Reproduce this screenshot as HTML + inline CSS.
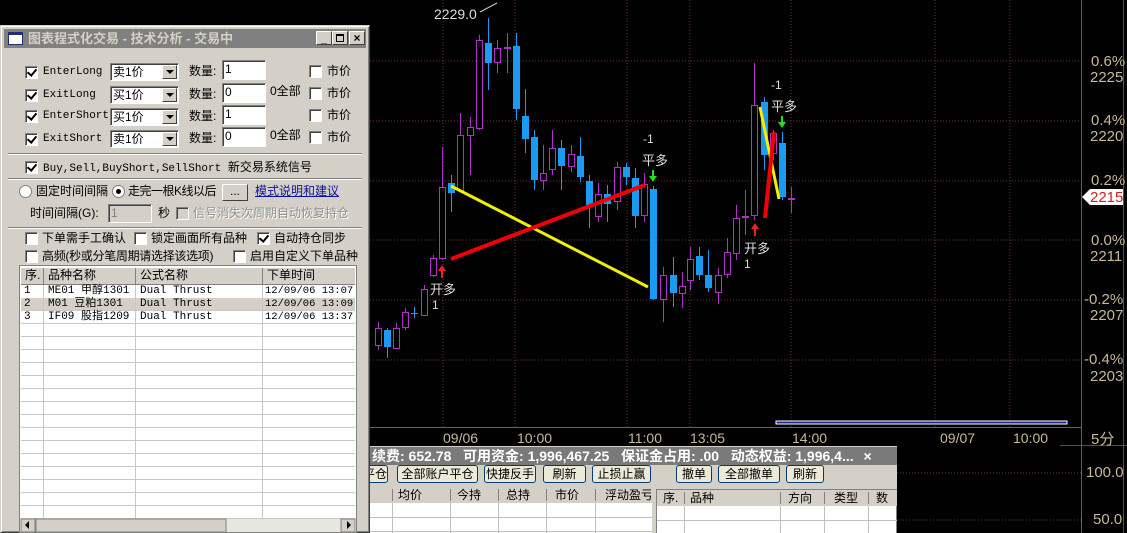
<!DOCTYPE html>
<html><head><meta charset="utf-8"><style>
*{margin:0;padding:0;box-sizing:border-box}
body{width:1127px;height:533px;overflow:hidden;background:#000;position:relative;font-family:"Liberation Sans","Noto Sans CJK SC","WenQuanYi Zen Hei",sans-serif;font-size:12px;color:#000}
.a{position:absolute;white-space:nowrap}
.t{position:absolute;white-space:nowrap;font-size:12px;line-height:16px}
.cb{position:absolute;width:13px;height:13px;background:#fff;border:1px solid;border-color:#808080 #fff #fff #808080;box-shadow:inset 1px 1px 0 #404040}
.cb.k::after{content:"";position:absolute;left:3px;top:0px;width:4px;height:7px;border:solid #000;border-width:0 2px 2px 0;transform:rotate(40deg)}
.cb.d{background:#d4d0c8}
.sel{position:absolute;width:69px;height:18px;background:#fff;border:1px solid;border-color:#808080 #fff #fff #808080;box-shadow:inset 1px 1px 0 #404040;padding-left:2px;line-height:16px;font-size:12px}
.sel i{position:absolute;right:1px;top:1px;width:15px;height:14px;background:#d4d0c8;border:1px solid;border-color:#fff #404040 #404040 #fff}
.sel i::after{content:"";position:absolute;left:3px;top:4px;border:4px solid transparent;border-top:4px solid #000}
.inp{position:absolute;width:44px;height:20px;background:#fff;border:1px solid;border-color:#808080 #fff #fff #808080;box-shadow:inset 1px 1px 0 #404040;padding-left:2px;line-height:17px}
.sep{position:absolute;left:8px;width:354px;height:2px;border-top:1px solid #808080;border-bottom:1px solid #fff}
.mono{font-family:"Liberation Mono","Noto Sans CJK SC",monospace;font-size:11px;line-height:16px}
.btn{position:absolute;top:465px;height:18px;background:#ece9d8;border:1px solid #003c74;border-radius:3px;line-height:16px;text-align:center;font-size:12px;white-space:nowrap;overflow:hidden}
.ax{position:absolute;color:#c8b898;font-size:15px;white-space:nowrap}
</style></head><body>
<svg class="a" style="left:0;top:0" width="1127" height="533">
<g stroke="#6a3a28" stroke-dasharray="1,2" stroke-width="1">
<line x1="370" y1="61" x2="1082" y2="61"/><line x1="370" y1="121" x2="1082" y2="121"/><line x1="370" y1="181" x2="1082" y2="181"/><line x1="370" y1="240" x2="1082" y2="240"/><line x1="370" y1="300" x2="1082" y2="300"/><line x1="370" y1="360" x2="1082" y2="360"/>
<line x1="897" y1="473" x2="1082" y2="473"/><line x1="897" y1="520" x2="1082" y2="520"/>
<line x1="443" y1="0" x2="443" y2="427"/><line x1="515" y1="0" x2="515" y2="427"/><line x1="627" y1="0" x2="627" y2="427"/><line x1="690" y1="0" x2="690" y2="427"/><line x1="791" y1="0" x2="791" y2="427"/><line x1="935" y1="0" x2="935" y2="427"/><line x1="1010" y1="0" x2="1010" y2="427"/>
</g>
<line x1="370" y1="427.5" x2="1082" y2="427.5" stroke="#7a5a48"/>
<line x1="1081.5" y1="0" x2="1081.5" y2="533" stroke="#7a5a48"/>
<line x1="1060" y1="445.5" x2="1127" y2="445.5" stroke="#c02020"/>
<line x1="1123.5" y1="0" x2="1123.5" y2="533" stroke="#c02020"/>
<rect x="776" y="421" width="291" height="3" fill="#1a2a90" stroke="#fff" stroke-width="1"/>
<g id="cd"></g>
<line x1="451" y1="186" x2="648" y2="287" stroke="#f0f000" stroke-width="3"/>
<line x1="451" y1="259" x2="645" y2="185" stroke="#f00000" stroke-width="4"/>
<line x1="760" y1="107" x2="779" y2="199" stroke="#f0f000" stroke-width="3"/>
<line x1="765" y1="218" x2="774" y2="132" stroke="#f00000" stroke-width="4"/>
<line x1="480" y1="12" x2="497" y2="3" stroke="#ccc"/>
<path d="M442 265l-4 6h3v7h2v-7h3z" fill="#f02020"/><path d="M755 223l-4 6h3v7h2v-7h3z" fill="#f02020"/>
<path d="M653 182l-4-6h3v-6h2v6h3z" fill="#20e020"/><path d="M782 128l-4-6h3v-6h2v6h3z" fill="#20e020"/>
<path d="M1082 197l8-8h33v16h-33z" fill="#fff"/>
</svg>
<div class="a" style="left:434px;top:6px;color:#ddd;font-size:14px">2229.0</div>
<div class="a" style="left:430px;top:279px;color:#ddd;font-size:13px">开多</div>
<div class="a" style="left:432px;top:298px;color:#ddd;font-size:12px">1</div>
<div class="a" style="left:643px;top:132px;color:#ddd;font-size:12px">-1</div>
<div class="a" style="left:642px;top:150px;color:#ddd;font-size:13px">平多</div>
<div class="a" style="left:771px;top:78px;color:#ddd;font-size:12px">-1</div>
<div class="a" style="left:771px;top:96px;color:#ddd;font-size:13px">平多</div>
<div class="a" style="left:744px;top:238px;color:#ddd;font-size:13px">开多</div>
<div class="a" style="left:744px;top:257px;color:#ddd;font-size:12px">1</div>
<div class="ax" style="left:1091px;top:53px">0.6%</div><div class="ax" style="left:1090px;top:69px">2225</div>
<div class="ax" style="left:1091px;top:112px">0.4%</div><div class="ax" style="left:1090px;top:128px">2220</div>
<div class="ax" style="left:1091px;top:172px">0.2%</div><div class="ax" style="left:1090px;top:189px;color:#d02020">2215</div>
<div class="ax" style="left:1091px;top:232px">0.0%</div><div class="ax" style="left:1090px;top:248px">2211</div>
<div class="ax" style="left:1084px;top:291px">-0.2%</div><div class="ax" style="left:1090px;top:307px">2207</div>
<div class="ax" style="left:1084px;top:351px">-0.4%</div><div class="ax" style="left:1090px;top:368px">2203</div>
<div class="ax" style="left:1091px;top:428px">5分</div>
<div class="ax" style="left:1086px;top:464px">100.0</div>
<div class="ax" style="left:1093px;top:511px">50.0</div>
<div class="ax" style="left:443px;top:430px;font-size:14px">09/06</div>
<div class="ax" style="left:517px;top:430px;font-size:14px">10:00</div>
<div class="ax" style="left:628px;top:430px;font-size:14px">11:00</div>
<div class="ax" style="left:690px;top:430px;font-size:14px">13:05</div>
<div class="ax" style="left:792px;top:430px;font-size:14px">14:00</div>
<div class="ax" style="left:940px;top:430px;font-size:14px">09/07</div>
<div class="ax" style="left:1013px;top:430px;font-size:14px">10:00</div>

<!-- bottom panel -->
<div class="a" style="left:370px;top:446px;width:527px;height:87px;background:#d4d0c8;overflow:hidden">
 <div class="a" style="left:0;top:1px;width:527px;height:18px;background:#7a7a7a;color:#fff;font-weight:bold;font-size:14px;line-height:18px;padding-left:2px">续费: 652.78&nbsp;&nbsp; 可用资金: 1,996,467.25&nbsp;&nbsp; 保证金占用: .00&nbsp;&nbsp; 动态权益: 1,996,4... <span style="margin-left:6px">×</span></div>
</div>
<div class="btn" style="left:362px;width:26px;text-align:right;padding-right:2px">平仓</div>
<div class="btn" style="left:397px;width:81px">全部账户平仓</div>
<div class="btn" style="left:484px;width:52px">快捷反手</div>
<div class="btn" style="left:543px;width:43px">刷新</div>
<div class="btn" style="left:592px;width:59px">止损止赢</div>
<div class="btn" style="left:676px;width:36px">撤单</div>
<div class="btn" style="left:718px;width:62px">全部撤单</div>
<div class="btn" style="left:786px;width:38px">刷新</div>
<svg class="a" style="left:370px;top:487px" width="527" height="46">
<rect x="0" y="0" width="282" height="46" fill="#fff"/>
<rect x="0" y="0" width="282" height="16" fill="#d4d0c8"/>
<g stroke="#c0c0c0"><line x1="0" y1="30.5" x2="282" y2="30.5"/><line x1="0" y1="44.5" x2="282" y2="44.5"/>
<line x1="22.5" y1="16" x2="22.5" y2="46"/><line x1="80.5" y1="16" x2="80.5" y2="46"/><line x1="128.5" y1="16" x2="128.5" y2="46"/><line x1="176.5" y1="16" x2="176.5" y2="46"/><line x1="225.5" y1="16" x2="225.5" y2="46"/></g>
<g stroke="#808080"><line x1="22.5" y1="2" x2="22.5" y2="14"/><line x1="80.5" y1="2" x2="80.5" y2="14"/><line x1="128.5" y1="2" x2="128.5" y2="14"/><line x1="176.5" y1="2" x2="176.5" y2="14"/><line x1="225.5" y1="2" x2="225.5" y2="14"/></g>
<rect x="286.5" y="2.5" width="240" height="44" fill="#fff" stroke="#808080"/>
<rect x="287" y="3" width="240" height="16" fill="#d4d0c8"/>
<g stroke="#c0c0c0"><line x1="287" y1="33.5" x2="527" y2="33.5"/><line x1="314.5" y1="19" x2="314.5" y2="46"/><line x1="410.5" y1="19" x2="410.5" y2="46"/><line x1="454.5" y1="19" x2="454.5" y2="46"/><line x1="498.5" y1="19" x2="498.5" y2="46"/></g>
<g stroke="#808080"><line x1="314.5" y1="5" x2="314.5" y2="17"/><line x1="410.5" y1="5" x2="410.5" y2="17"/><line x1="454.5" y1="5" x2="454.5" y2="17"/><line x1="498.5" y1="5" x2="498.5" y2="17"/></g>
</svg>
<div class="t" style="left:398px;top:487px">均价</div><div class="t" style="left:457px;top:487px">今持</div><div class="t" style="left:506px;top:487px">总持</div><div class="t" style="left:555px;top:487px">市价</div><div class="t" style="left:605px;top:487px;width:46px;overflow:hidden">浮动盈亏</div>
<div class="t" style="left:663px;top:490px">序.</div><div class="t" style="left:690px;top:490px">品种</div><div class="t" style="left:788px;top:490px">方向</div><div class="t" style="left:834px;top:490px">类型</div><div class="t" style="left:876px;top:490px">数</div>

<!-- dialog -->
<div class="a" style="left:0;top:25px;width:370px;height:508px;background:#d4d0c8;border:1px solid;border-color:#d4d0c8 #404040 #404040 #d4d0c8;box-shadow:inset 1px 1px 0 #fff,inset -1px -1px 0 #808080"></div>
<div class="a" style="left:4px;top:29px;width:362px;height:19px;background:#808080;color:#d4d0c8;font-weight:bold;font-size:13px;line-height:19px;padding-left:24px">图表程式化交易 - 技术分析 - 交易中</div>
<div class="a" style="left:8px;top:32px;width:15px;height:13px;background:#fff;border:1px solid #203070;border-top:3px solid #203070"></div>
<div class="a" style="left:316px;top:31px;width:16px;height:14px;background:#d4d0c8;border:1px solid;border-color:#fff #404040 #404040 #fff;font-size:11px;text-align:center;line-height:14px;font-weight:bold">_</div>
<div class="a" style="left:332px;top:31px;width:16px;height:14px;background:#d4d0c8;border:1px solid;border-color:#fff #404040 #404040 #fff"><div style="margin:2px 3px;width:8px;height:8px;border:1px solid #000;border-top-width:2px"></div></div>
<div class="a" style="left:349px;top:31px;width:16px;height:14px;background:#d4d0c8;border:1px solid;border-color:#fff #404040 #404040 #fff;font-size:12px;text-align:center;line-height:12px;font-weight:bold">×</div>

<div class="cb k" style="left:25px;top:66px"></div><div class="a mono" style="left:43px;top:64px">EnterLong</div>
<div class="cb k" style="left:25px;top:89px"></div><div class="a mono" style="left:43px;top:87px">ExitLong</div>
<div class="cb k" style="left:25px;top:110px"></div><div class="a mono" style="left:43px;top:108px">EnterShort</div>
<div class="cb k" style="left:25px;top:133px"></div><div class="a mono" style="left:43px;top:131px">ExitShort</div>
<div class="sel" style="left:110px;top:63px">卖1价<i></i></div>
<div class="sel" style="left:110px;top:86px">买1价<i></i></div>
<div class="sel" style="left:110px;top:108px">买1价<i></i></div>
<div class="sel" style="left:110px;top:130px">卖1价<i></i></div>
<div class="t" style="left:189px;top:63px">数量:</div><div class="t" style="left:189px;top:86px">数量:</div><div class="t" style="left:189px;top:108px">数量:</div><div class="t" style="left:189px;top:130px">数量:</div>
<div class="inp" style="left:222px;top:60px">1</div><div class="inp" style="left:222px;top:83px">0</div><div class="inp" style="left:222px;top:105px">1</div><div class="inp" style="left:222px;top:127px">0</div>
<div class="t" style="left:270px;top:83px">0全部</div><div class="t" style="left:270px;top:127px">0全部</div>
<div class="cb" style="left:309px;top:65px"></div><div class="t" style="left:327px;top:63px">市价</div>
<div class="cb" style="left:309px;top:87px"></div><div class="t" style="left:327px;top:85px">市价</div>
<div class="cb" style="left:309px;top:109px"></div><div class="t" style="left:327px;top:107px">市价</div>
<div class="cb" style="left:309px;top:131px"></div><div class="t" style="left:327px;top:129px">市价</div>
<div class="sep" style="top:153px"></div>
<div class="cb k" style="left:25px;top:161px"></div><div class="a mono" style="left:43px;top:159px">Buy,Sell,BuyShort,SellShort <span style="font-family:'Noto Sans CJK SC',sans-serif;font-size:12px">新交易系统信号</span></div>
<div class="sep" style="top:178px"></div>
<div class="a" style="left:19px;top:185px;width:13px;height:13px;border-radius:50%;background:#fff;border:1px solid #808080"></div>
<div class="t" style="left:36px;top:183px">固定时间间隔</div>
<div class="a" style="left:112px;top:185px;width:13px;height:13px;border-radius:50%;background:#fff;border:1px solid #808080"><div style="margin:3px;width:5px;height:5px;border-radius:50%;background:#000"></div></div>
<div class="t" style="left:128px;top:183px;letter-spacing:-0.5px">走完一根K线以后</div>
<div class="a" style="left:222px;top:184px;width:26px;height:17px;background:#d4d0c8;border:1px solid;border-color:#fff #404040 #404040 #fff;text-align:center;line-height:13px">...</div>
<div class="t" style="left:255px;top:183px;color:#1010a0;text-decoration:underline">模式说明和建议</div>
<div class="t" style="left:30px;top:205px">时间间隔(G):</div>
<div class="inp" style="left:108px;top:204px;background:#d4d0c8;color:#808080;height:19px">1</div>
<div class="t" style="left:158px;top:205px">秒</div>
<div class="cb d" style="left:176px;top:207px"></div>
<div class="t" style="left:193px;top:205px;color:#909090;text-shadow:1px 1px 0 #fff">信号消失次周期自动恢复持仓</div>
<div class="sep" style="top:227px"></div>
<div class="cb" style="left:25px;top:232px"></div><div class="t" style="left:42px;top:230px">下单需手工确认</div>
<div class="cb" style="left:134px;top:232px"></div><div class="t" style="left:151px;top:230px">锁定画面所有品种</div>
<div class="cb k" style="left:257px;top:232px"></div><div class="t" style="left:274px;top:230px">自动持仓同步</div>
<div class="cb" style="left:25px;top:250px"></div><div class="t" style="left:42px;top:248px;letter-spacing:-0.3px">高频(秒或分笔周期请选择该选项)</div>
<div class="cb" style="left:233px;top:250px"></div><div class="t" style="left:250px;top:248px">启用自定义下单品种</div>
<svg class="a" style="left:19px;top:265px" width="338" height="268">
<rect x="0.5" y="0.5" width="337" height="267" fill="#fff" stroke="#808080"/>
<rect x="2" y="2" width="334" height="17" fill="#d4d0c8"/>
<g stroke="#fff"><line x1="2" y1="2.5" x2="336" y2="2.5"/></g>
<g stroke="#808080"><line x1="2" y1="19.5" x2="336" y2="19.5"/><line x1="24.5" y1="3" x2="24.5" y2="19"/><line x1="116.5" y1="3" x2="116.5" y2="19"/><line x1="243.5" y1="3" x2="243.5" y2="19"/></g>
<rect x="2" y="33" width="334" height="13" fill="#d4d0c8"/>
<g id="gl" stroke="#c8c8c8"></g>
<rect x="2" y="254" width="334" height="13" fill="#e8e6e0"/>
<rect x="2" y="254" width="14" height="13" fill="#d4d0c8" stroke="#808080"/>
<rect x="17" y="254" width="190" height="13" fill="#d4d0c8" stroke="#808080"/>
<rect x="322" y="254" width="14" height="13" fill="#d4d0c8" stroke="#808080"/>
<path d="M6 260l4-4v8z" fill="#000"/><path d="M332 260l-4-4v8z" fill="#000"/>
</svg>
<div class="t" style="left:25px;top:267px">序.</div><div class="t" style="left:48px;top:267px">品种名称</div><div class="t" style="left:140px;top:267px">公式名称</div><div class="t" style="left:267px;top:267px">下单时间</div>
<div class="a mono" style="left:24px;top:285px;line-height:13px">1<br>2<br>3</div>
<div class="a mono" style="left:48px;top:285px;line-height:13px">ME01 甲醇1301<br>M01 豆粕1301<br>IF09 股指1209</div>
<div class="a mono" style="left:140px;top:285px;line-height:13px">Dual Thrust<br>Dual Thrust<br>Dual Thrust</div>
<div class="a mono" style="left:265px;top:285px;line-height:13px;font-size:10.5px">12/09/06 13:07<br>12/09/06 13:09<br>12/09/06 13:37</div>
<script>
var C=[[378,328,345,'P',322,350],[387,330,347,'B',328,358],[396,328,348,'P',323,349],[405,312,327,'P',308,330],[414,313,314,'B',307,318],[424,289,315,'P',285,316],[433,258,275,'P',255,277],[442,187,258,'P',147,260],[451,183,193,'B',175,212],[460,135,190,'P',113,192],[470,127,135,'P',117,175],[479,40,128,'P',35,130],[488,43,63,'B',18,90],[497,48,62,'P',40,73],[507,47,48,'P',33,73],[516,46,109,'B',33,120],[525,116,139,'B',89,153],[534,137,180,'B',130,190],[543,173,180,'P',145,190],[552,148,169,'P',130,175],[561,148,166,'B',140,190],[571,154,166,'P',145,172],[580,156,177,'B',137,182],[589,181,205,'B',175,228],[598,194,216,'P',183,222],[607,194,204,'B',185,222],[617,167,201,'P',162,210],[626,167,177,'B',163,185],[635,178,216,'B',168,228],[644,184,215,'P',173,222],[653,189,299,'B',186,300],[663,275,299,'P',267,322],[673,275,293,'B',257,307],[682,286,293,'P',272,308],[690,259,280,'P',247,290],[699,256,275,'B',247,280],[708,275,288,'B',250,292],[718,275,292,'P',268,304],[727,252,274,'P',238,278],[736,218,253,'P',205,260],[745,216,217,'P',190,235],[754,105,215,'P',63,220],[764,102,155,'B',97,170],[773,133,153,'P',130,160],[782,143,197,'B',132,200],[791,198,199,'P',187,213]];
var s='';C.forEach(function(c){var col=c[3]=='B'?'#1a9af0':'#b030c8';
s+='<line x1="'+(c[0]+.5)+'" y1="'+c[4]+'" x2="'+(c[0]+.5)+'" y2="'+c[5]+'" stroke="'+col+'"/>';
if(c[3]=='B')s+='<rect x="'+(c[0]-3)+'" y="'+c[1]+'" width="7" height="'+Math.max(1,c[2]-c[1])+'" fill="'+col+'"/>';
else s+='<rect x="'+(c[0]-2.5)+'" y="'+(c[1]+.5)+'" width="6" height="'+Math.max(1,c[2]-c[1])+'" fill="#000" stroke="'+col+'"/>';});
document.getElementById('cd').innerHTML=s;
var g='';for(var y=45.5;y<254;y+=13)g+='<line x1="2" y1="'+y+'" x2="336" y2="'+y+'"/>';
g+='<line x1="24.5" y1="20" x2="24.5" y2="254"/><line x1="116.5" y1="20" x2="116.5" y2="254"/><line x1="243.5" y1="20" x2="243.5" y2="254"/>';
document.getElementById('gl').innerHTML=g;
</script>
</body></html>
